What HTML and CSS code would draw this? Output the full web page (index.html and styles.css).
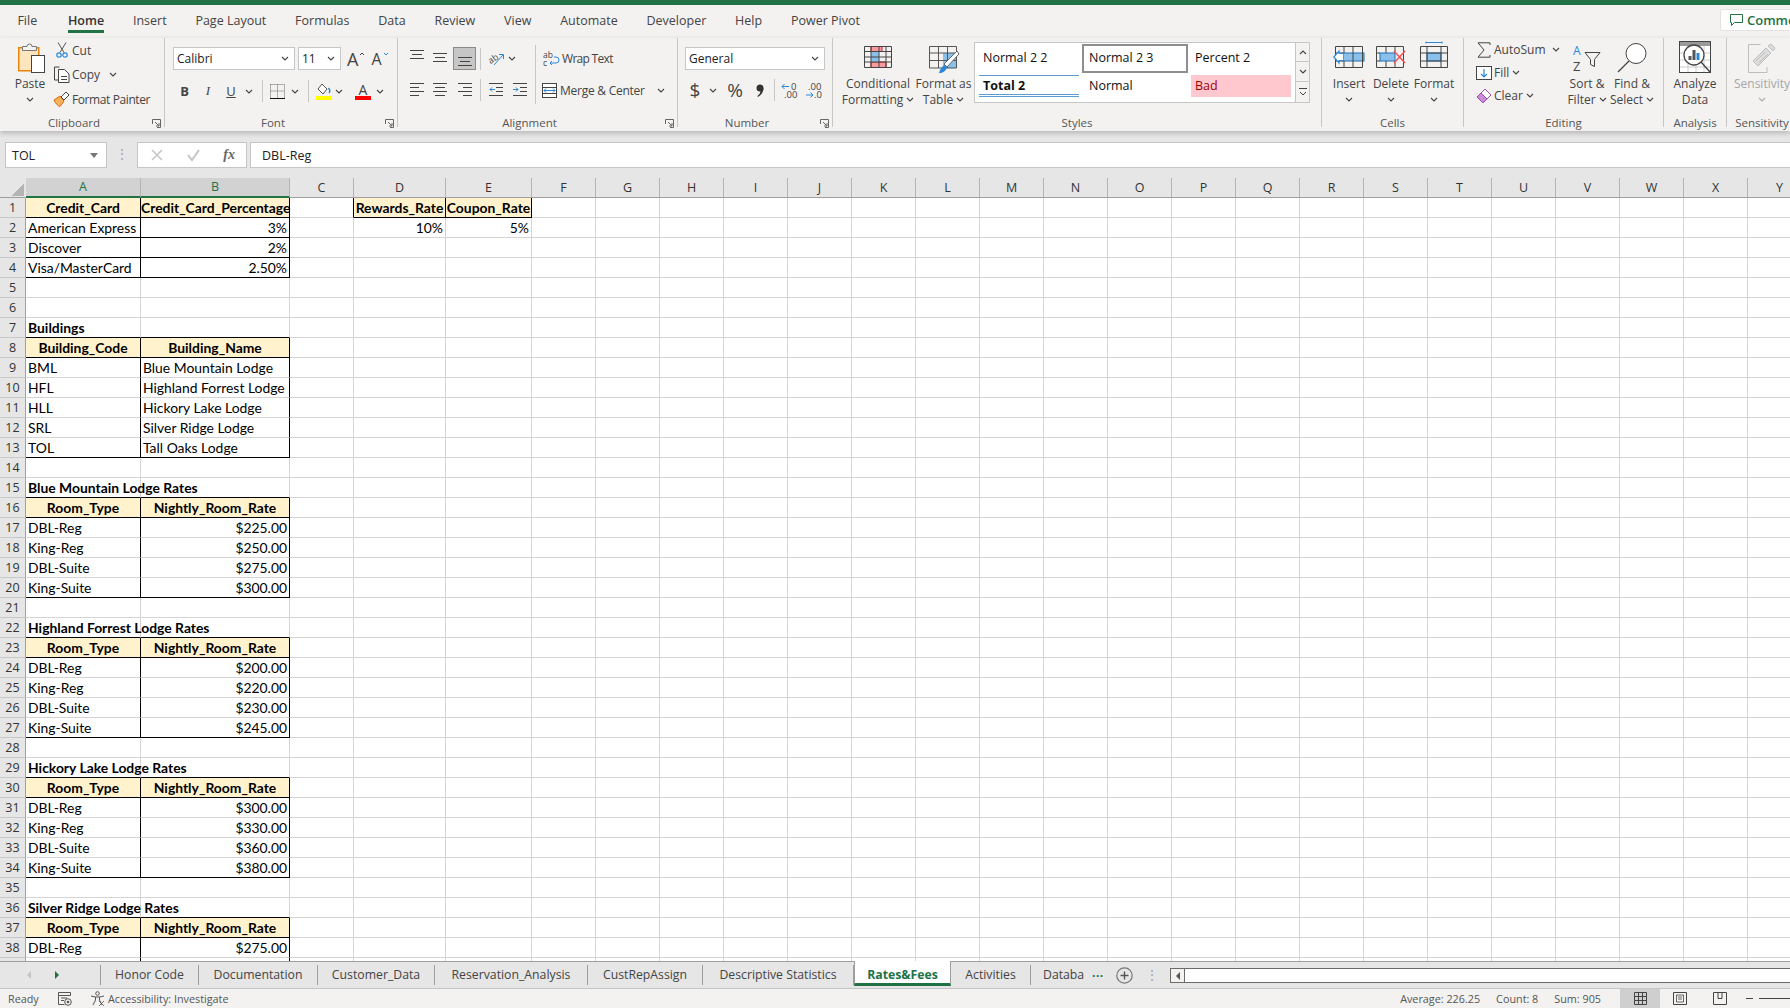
FILE: index.html
```html
<!DOCTYPE html>
<html lang="en">
<head>
    <meta charset="UTF-8">
    <title>Rates&amp;Fees - Excel</title>
    <link rel="stylesheet" href="styles.css">
</head>
<body>
    <!-- shared icon shapes -->
    <svg class="defs" width="0" height="0">
        <symbol id="chev" viewBox="0 0 8 5"><path d="M1 1l3 3 3-3" fill="none" stroke="#444" stroke-width="1.1"/></symbol>
        <symbol id="launch" viewBox="0 0 9 9"><path d="M.5 5V.5H8.5V8.5H5M3 3l4 4M7 4v3H4" fill="none" stroke="#666"/></symbol>
        <symbol id="a-lines" viewBox="0 0 14 10"><path d="M0 .5h14M2 4.5h10M0 8.5h14" stroke="#444" fill="none"/></symbol>
        <symbol id="a-left" viewBox="0 0 14 14"><path d="M0 .5h14M0 4.5h9M0 8.5h14M0 12.5h9" stroke="#444" fill="none"/></symbol>
        <symbol id="a-center" viewBox="0 0 14 14"><path d="M0 .5h14M2 4.5h10M0 8.5h14M2 12.5h10" stroke="#444" fill="none"/></symbol>
        <symbol id="a-right" viewBox="0 0 14 14"><path d="M0 .5h14M5 4.5h9M0 8.5h14M5 12.5h9" stroke="#444" fill="none"/></symbol>
    </svg>

    <div class="titlebar"></div>

    <!-- ribbon tabs -->
    <div class="tabs">
        <div class="tab">File</div>
        <div class="tab active"><span>Home</span></div>
        <div class="tab">Insert</div>
        <div class="tab">Page Layout</div>
        <div class="tab">Formulas</div>
        <div class="tab">Data</div>
        <div class="tab">Review</div>
        <div class="tab">View</div>
        <div class="tab">Automate</div>
        <div class="tab">Developer</div>
        <div class="tab">Help</div>
        <div class="tab">Power Pivot</div>
        <div class="comments">
            <svg width="15" height="14" viewBox="0 0 15 14"><path d="M1.5 1.5h12v8h-8l-3 3v-3h-1z" fill="none" stroke="#217346"/></svg>
            <span>Comments</span>
        </div>
    </div>

    <!-- ribbon -->
    <div class="ribbon">
        <div class="group g-clip">
            <div class="group-body">
                <div class="big paste">
                    <div class="big-icon">
                        <svg width="27" height="30" viewBox="0 0 27 30">
                            <rect x=".75" y="4.75" width="20" height="23" fill="#fde6bd" stroke="#e8830c" stroke-width="1.5"/>
                            <path d="M4.5 7.5v-4H9a2.5 2.5 0 0 1 5 0h4.500v4z" fill="#f3f2f1" stroke="#777"/>
                            <rect x="13.500" y="12.500" width="13" height="17" fill="#fff" stroke="#444"/>
                        </svg>
                    </div>
                    <div class="big-label">Paste</div>
                    <div class="big-label"><svg class="chev"><use href="#chev"/></svg></div>
                </div>
                <div class="small-rows clip-rows">
                    <div class="small-row">
                        <span class="small-icon">
                            <svg width="12" height="16" viewBox="0 0 12 16"><path d="M2 .5l6 10M10 .5L4 10.500" stroke="#555" fill="none"/><circle cx="3" cy="13" r="2.200" fill="none" stroke="#2b88d8" stroke-width="1.200"/><circle cx="9" cy="13" r="2.200" fill="none" stroke="#2b88d8" stroke-width="1.200"/></svg>
                        </span>
                        <span>Cut</span>
                    </div>
                    <div class="small-row">
                        <span class="small-icon">
                            <svg width="16" height="17" viewBox="0 0 16 17"><path d="M5.500 1H.5v13H4" fill="none" stroke="#444"/><path d="M4.500 3.500h6l4.500 4.500v8.500H4.500z" fill="#fff" stroke="#444"/><path d="M7 10.500h6M7 13.500h6" stroke="#444"/></svg>
                        </span>
                        <span>Copy</span>
                        <svg class="chev copy-chev"><use href="#chev"/></svg>
                    </div>
                    <div class="small-row">
                        <span class="small-icon">
                            <svg width="17" height="16" viewBox="0 0 17 16"><path d="M1 9l6-4 4 5-4 5.500C5 15 2 12 1 9z" fill="#f7b25c" stroke="#d8680c"/><path d="M8 6l5-5 3 3-5 5z" fill="#fff" stroke="#444"/></svg>
                        </span>
                        <span class="painter">Format Painter</span>
                    </div>
                </div>
            </div>
            <div class="group-label"><span>Clipboard</span><svg class="launch"><use href="#launch"/></svg></div>
        </div>

        <div class="group g-font">
            <div class="group-body block">
                <div class="font-top">
                    <div class="combo font-name"><span>Calibri</span><svg class="chev"><use href="#chev"/></svg></div>
                    <div class="combo font-size"><span>11</span><svg class="chev"><use href="#chev"/></svg></div>
                    <div class="grow">A<svg width="6" height="4" viewBox="0 0 6 4"><path d="M1 3l2-2 2 2" fill="none" stroke="#444"/></svg></div>
                    <div class="grow shrink">A<svg width="6" height="4" viewBox="0 0 6 4"><path d="M1 1l2 2 2-2" fill="none" stroke="#2b88d8"/></svg></div>
                </div>
                <div class="font-btm">
                    <div class="cell-b">B</div>
                    <div class="cell-i">I</div>
                    <div class="cell-u">U</div>
                    <svg class="chev"><use href="#chev"/></svg>
                    <div class="sep"></div>
                    <svg width="15" height="15" viewBox="0 0 15 15"><path d="M.5 .5h14v13M.5 .5v13M7.500 .5v13M.5 7h14" fill="none" stroke="#666" stroke-dasharray="1 1"/><path d="M0 14.500h15" stroke="#111"/></svg>
                    <svg class="chev"><use href="#chev"/></svg>
                    <div class="sep"></div>
                    <svg width="16" height="17" viewBox="0 0 16 17"><path d="M6 1l5 5-4 5-5-5z" fill="#fff" stroke="#555"/><path d="M12.500 5c1.500 2 1.500 4 .5 5" fill="none" stroke="#2b88d8" stroke-width="1.500"/><rect y="13" width="16" height="4" fill="#ffff00"/></svg>
                    <svg class="chev chev-start"><use href="#chev"/></svg>
                    <div class="color-a">A<i></i></div>
                    <svg class="chev"><use href="#chev"/></svg>
                </div>
            </div>
            <div class="group-label"><span>Font</span><svg class="launch"><use href="#launch"/></svg></div>
        </div>

        <div class="group g-align">
            <div class="group-body block align-body">
                <div class="align-grid">
                    <svg class="al al-top"><use href="#a-lines"/></svg>
                    <svg class="al al-mid"><use href="#a-lines"/></svg>
                    <div class="al-on"><svg class="al al-bot"><use href="#a-lines"/></svg></div>
                    <div class="sep"></div>
                    <svg width="17" height="16" viewBox="0 0 17 16"><text x="0" y="11" font-size="9" fill="#444" font-family="Open Sans" transform="rotate(-35 5 8)">ab</text><path d="M6 14L15 4M11 3.500h4.500V8" fill="none" stroke="#2b88d8"/></svg>
                    <svg class="chev chev-start"><use href="#chev"/></svg>
                    <svg class="al14"><use href="#a-left"/></svg>
                    <svg class="al14"><use href="#a-center"/></svg>
                    <svg class="al14"><use href="#a-right"/></svg>
                    <div class="sep"></div>
                    <svg width="14" height="14" viewBox="0 0 14 14"><path d="M0 .5h14M7 4.500h7M7 8.500h7M0 12.500h14" stroke="#444" fill="none"/><path d="M6 6.500H1M3 4.500l-2 2 2 2" stroke="#2b88d8" fill="none"/></svg>
                    <svg width="14" height="14" viewBox="0 0 14 14"><path d="M0 .5h14M7 4.500h7M7 8.500h7M0 12.500h14" stroke="#444" fill="none"/><path d="M0 6.500h5M3 4.500l2 2-2 2" stroke="#2b88d8" fill="none"/></svg>
                </div>
                <div class="vsep"></div>
                <div class="merge-col">
                    <div class="merge-row">
                        <svg width="17" height="17" viewBox="0 0 17 17"><text x="1" y="8" font-size="8.500" fill="#444" font-family="Open Sans">ab</text><text x="1" y="16" font-size="8.500" fill="#444" font-family="Open Sans">c</text><path d="M12 7h2a2.500 2.500 0 0 1 0 6H8M10 11l-2 2 2 2" fill="none" stroke="#2b88d8"/></svg>
                        <span class="wrap-text">Wrap Text</span>
                    </div>
                    <div class="merge-row">
                        <svg width="15" height="15" viewBox="0 0 15 15"><rect x=".5" y=".5" width="14" height="14" fill="#fff" stroke="#444"/><path d="M.5 4.500h14M.5 10.500h14" stroke="#444"/><path d="M2 7.500h11M4 5.500l-2 2 2 2M11 5.500l2 2-2 2" fill="none" stroke="#2b88d8"/></svg>
                        <span class="merge-text">Merge &amp; Center</span>
                        <svg class="chev merge-chev"><use href="#chev"/></svg>
                    </div>
                </div>
            </div>
            <div class="group-label"><span>Alignment</span><svg class="launch"><use href="#launch"/></svg></div>
        </div>

        <div class="group g-number">
            <div class="group-body block">
                <div class="combo number-format"><span>General</span><svg class="chev"><use href="#chev"/></svg></div>
                <div class="number-btm">
                    <div class="num-sym">$</div>
                    <svg class="chev"><use href="#chev"/></svg>
                    <div class="num-sym">%</div>
                    <svg width="8" height="13" viewBox="0 0 8 13"><circle cx="4" cy="4" r="3.500" fill="#333"/><path d="M7.500 4c0 4-2 7-5.500 9l-.6-1c2-1.500 3-3 3-5z" fill="#333"/></svg>
                    <div class="sep"></div>
                    <svg width="17" height="17" viewBox="0 0 17 17"><text x="10" y="8" font-size="9.500" fill="#444" font-family="Open Sans">0</text><text x="3" y="16" font-size="9.500" fill="#444" font-family="Open Sans">.00</text><path d="M8 4.500H1M3.500 2L1 4.500 3.500 7" fill="none" stroke="#2b88d8"/></svg>
                    <svg width="17" height="17" viewBox="0 0 17 17"><text x="3" y="8" font-size="9.500" fill="#444" font-family="Open Sans">.00</text><text x="9" y="16" font-size="9.500" fill="#444" font-family="Open Sans">.0</text><path d="M1 13h7M5.500 10.500L8 13l-2.500 2.500" fill="none" stroke="#2b88d8"/></svg>
                </div>
            </div>
            <div class="group-label"><span>Number</span><svg class="launch"><use href="#launch"/></svg></div>
        </div>

        <div class="group g-styles">
            <div class="group-body">
                <div class="big cond">
                    <div class="big-icon">
                        <svg width="28" height="22" viewBox="0 0 28 22">
                            <path d="M7 .5h11v5H7zM7 16h15v5.500H7z" fill="#fa9a9f" stroke="#c82127"/>
                            <rect x="7" y="6" width="8" height="10" fill="#8ac0ea"/>
                            <path d="M.5 .5h27v21H.5zM.5 5.500h27M.5 11h27M.5 16h27M7 .5v21M15 .5v21M22 .5v21" fill="none" stroke="#444"/>
                        </svg>
                    </div>
                    <div class="big-label">Conditional</div>
                    <div class="big-label">Formatting <svg class="chev"><use href="#chev"/></svg></div>
                </div>
                <div class="big fmt">
                    <div class="big-icon">
                        <svg width="30" height="28" viewBox="0 0 30 28">
                            <rect x="14" y="7" width="14" height="15" fill="#8ac0ea"/>
                            <path d="M.5 .5h27v21.500H.5zM.5 7h27M.5 14.500h27M9.500 .5v21.500M18.500 .5v21.500" fill="none" stroke="#555"/>
                            <path d="M28 5L15 18l3 3L30 8z" fill="#fff" stroke="#666"/>
                            <path d="M10 27c1-4 3-7 6-8l2 2c-1 4-4 6-8 6z" fill="#2b88d8"/>
                        </svg>
                    </div>
                    <div class="big-label">Format as</div>
                    <div class="big-label">Table <svg class="chev"><use href="#chev"/></svg></div>
                </div>
                <div class="gallery">
                    <div class="style-cell">Normal 2 2</div>
                    <div class="style-cell boxed">Normal 2 3</div>
                    <div class="style-cell">Percent 2</div>
                    <div class="style-cell total">Total 2</div>
                    <div class="style-cell normal">Normal</div>
                    <div class="style-cell bad">Bad</div>
                </div>
                <div class="gallery-scroll">
                    <div><svg width="8" height="5" viewBox="0 0 8 5"><path d="M1 4l3-3 3 3" fill="none" stroke="#444" stroke-width="1.100"/></svg></div>
                    <div><svg class="chev"><use href="#chev"/></svg></div>
                    <div><svg width="8" height="8" viewBox="0 0 8 8"><path d="M0 .5h8M1 4l3 3 3-3" fill="none" stroke="#444"/></svg></div>
                </div>
            </div>
            <div class="group-label"><span>Styles</span></div>
        </div>

        <div class="group g-cells">
            <div class="group-body cells-body">
                <div class="big cell-btn">
                    <div class="big-icon">
                        <svg width="32" height="22" viewBox="0 0 32 22">
                            <rect x="10" y="7" width="21" height="8" fill="#8ac0ea" stroke="#1f6fb8"/>
                            <path d="M2.500 .5h27v21h-27zM2.500 7H10M2.500 15H10M11 .5V7M20 .5v21M11 15v6.500" fill="none" stroke="#444"/>
                            <path d="M10 7.500H6V5L.8 11 6 17v-2.500h4" fill="#fff" stroke="#2b88d8" stroke-width="1.200"/>
                        </svg>
                    </div>
                    <div class="big-label">Insert</div>
                    <div class="big-label"><svg class="chev"><use href="#chev"/></svg></div>
                </div>
                <div class="big cell-btn">
                    <div class="big-icon">
                        <svg width="30" height="22" viewBox="0 0 30 22">
                            <rect x="4" y="7" width="15" height="8" fill="#8ac0ea" stroke="#1f6fb8"/>
                            <path d="M.5 .5h27v21M.5 .5v21h27M.5 7H4M.5 15H4M10 .5V7M19 .5V7M10 15v6.500M19 15v6.500" fill="none" stroke="#444"/>
                            <path d="M18 5l11 12M29 5L18 17" stroke="#f25050" stroke-width="1.400"/>
                        </svg>
                    </div>
                    <div class="big-label">Delete</div>
                    <div class="big-label"><svg class="chev"><use href="#chev"/></svg></div>
                </div>
                <div class="big cell-btn wide">
                    <div class="big-icon">
                        <svg width="28" height="27" viewBox="0 0 28 27">
                            <path d="M6 1.500h16M6 .5v2M22 .5v2" stroke="#2b88d8" fill="none"/>
                            <rect x="7" y="12" width="14" height="8" fill="#8ac0ea" stroke="#1f6fb8"/>
                            <path d="M.5 5.500h27v21H.5zM.5 12h27M.5 20h27M7 5.500v21M21 5.500v21" fill="none" stroke="#444"/>
                        </svg>
                    </div>
                    <div class="big-label">Format</div>
                    <div class="big-label"><svg class="chev"><use href="#chev"/></svg></div>
                </div>
            </div>
            <div class="group-label"><span>Cells</span></div>
        </div>

        <div class="group g-editing">
            <div class="group-body">
                <div class="small-rows edit-rows">
                    <div class="small-row">
                        <span class="small-icon"><svg width="14" height="16" viewBox="0 0 14 16"><path d="M13 3V.8H1l6 7.200-6 7.200h12V13" fill="none" stroke="#444"/></svg></span>
                        <span>AutoSum</span>
                        <svg class="chev auto-chev"><use href="#chev"/></svg>
                    </div>
                    <div class="small-row">
                        <span class="small-icon"><svg width="16" height="14" viewBox="0 0 16 14"><rect x=".5" y=".5" width="15" height="13" fill="#fff" stroke="#444"/><path d="M8 3v8M5 8l3 3 3-3" fill="none" stroke="#2b88d8" stroke-width="1.200"/></svg></span>
                        <span>Fill</span>
                        <svg class="chev tight-chev"><use href="#chev"/></svg>
                    </div>
                    <div class="small-row">
                        <span class="small-icon"><svg width="16" height="16" viewBox="0 0 16 16"><path d="M1 9l8-8 6 6-8 8z" fill="#fff" stroke="#a24ab5"/><path d="M1 9l4-4 6 6-4 4z" fill="#c98dd6" stroke="#a24ab5"/></svg></span>
                        <span>Clear</span>
                        <svg class="chev tight-chev"><use href="#chev"/></svg>
                    </div>
                </div>
                <div class="big sort">
                    <div class="big-icon">
                        <svg width="30" height="28" viewBox="0 0 30 28">
                            <text x="1" y="11" font-size="12" fill="#2b88d8" font-family="Open Sans">A</text>
                            <text x="1" y="27" font-size="13" fill="#444" font-family="Open Sans">Z</text>
                            <path d="M13 8.500h15l-5.500 7v7l-4-2v-5z" fill="none" stroke="#444"/>
                        </svg>
                    </div>
                    <div class="big-label">Sort &amp;</div>
                    <div class="big-label">Filter <svg class="chev"><use href="#chev"/></svg></div>
                </div>
                <div class="big find">
                    <div class="big-icon">
                        <svg width="30" height="30" viewBox="0 0 30 30"><circle cx="19" cy="10.500" r="10" fill="#fff" stroke="#444"/><path d="M12 18L1 29" stroke="#444" stroke-width="1.200"/></svg>
                    </div>
                    <div class="big-label">Find &amp;</div>
                    <div class="big-label">Select <svg class="chev"><use href="#chev"/></svg></div>
                </div>
            </div>
            <div class="group-label"><span>Editing</span></div>
        </div>

        <div class="group g-analysis">
            <div class="group-body">
                <div class="big analyze">
                    <div class="big-icon">
                        <svg width="32" height="32" viewBox="0 0 32 32">
                            <rect x=".5" y=".5" width="31" height="31" fill="#fff" stroke="#444"/>
                            <rect x="1" y="1" width="30" height="4" fill="#999"/>
                            <path d="M1 12h30M1 19h30M1 26h30M9 5v26M17 5v26M25 5v26" stroke="#ccc"/>
                            <circle cx="15" cy="14" r="10" fill="#fff" stroke="#444" stroke-width="1.300"/>
                            <path d="M11 19v-4M15 19V9" stroke="#555" stroke-width="3"/>
                            <path d="M19 19v-7" stroke="#2b88d8" stroke-width="3"/>
                            <path d="M22 21l9 10" stroke="#444" stroke-width="1.400"/>
                        </svg>
                    </div>
                    <div class="big-label">Analyze</div>
                    <div class="big-label">Data</div>
                </div>
            </div>
            <div class="group-label"><span>Analysis</span></div>
        </div>

        <div class="group g-sens">
            <div class="group-body">
                <div class="big sens">
                    <div class="big-icon">
                        <svg width="28" height="30" viewBox="0 0 28 30">
                            <path d="M19 24v5.500H.5V1.500h12" fill="none" stroke="#bdbdbd"/>
                            <path d="M5 18L18 5l5 5-13 13z" fill="#ddd" stroke="#bdbdbd"/>
                            <path d="M20 3l3-2 4 4-2 3z" fill="#ddd" stroke="#bdbdbd"/>
                            <path d="M8 18l9-9M11 20l9-9" stroke="#bdbdbd"/>
                        </svg>
                    </div>
                    <div class="big-label">Sensitivity</div>
                    <div class="big-label"><svg class="chev"><use href="#chev"/></svg></div>
                </div>
            </div>
            <div class="group-label"><span>Sensitivity</span></div>
        </div>
    </div>

    <!-- formula bar -->
    <div class="formula-bar">
        <div class="name-box"><span>TOL</span><i class="drop"></i></div>
        <div class="dots">&#8942;</div>
        <div class="fx-box">
            <svg width="12" height="12" viewBox="0 0 12 12"><path d="M1 1l10 10M11 1L1 11" stroke="#c4c4c4" stroke-width="1.500"/></svg>
            <svg width="13" height="12" viewBox="0 0 13 12"><path d="M1 6l4 5 7-10" fill="none" stroke="#c4c4c4" stroke-width="2"/></svg>
            <span class="fx">fx</span>
        </div>
        <div class="formula-input">DBL-Reg</div>
    </div>

    <!-- sheet -->
    <div class="sheet">
        <table class="grid">
            <colgroup>
                <col class="c-head"><col class="c-a"><col class="c-b"><col class="c-c"><col class="c-d"><col class="c-e">
                <col class="c-n"><col class="c-n"><col class="c-n"><col class="c-n"><col class="c-n"><col class="c-n"><col class="c-n"><col class="c-n"><col class="c-n"><col class="c-n">
                <col class="c-n"><col class="c-n"><col class="c-n"><col class="c-n"><col class="c-n"><col class="c-n"><col class="c-n"><col class="c-n"><col class="c-n"><col class="c-n">
            </colgroup>
            <tr class="cols">
                <th class="corner"></th><th class="sel">A</th><th class="sel">B</th><th>C</th><th>D</th><th>E</th><th>F</th><th>G</th><th>H</th><th>I</th><th>J</th><th>K</th><th>L</th><th>M</th><th>N</th><th>O</th><th>P</th><th>Q</th><th>R</th><th>S</th><th>T</th><th>U</th><th>V</th><th>W</th><th>X</th><th>Y</th>
            </tr>
            <tr><th>1</th><td class="hd kr kb">Credit_Card</td><td class="hd kr kb">Credit_Card_Percentage</td><td class="kr"></td><td class="hd kr kb">Rewards_Rate</td><td class="hd kr kb">Coupon_Rate</td><td class="rest" colspan="20"></td></tr>
            <tr><th>2</th><td class="kr kb">American Express</td><td class="num kr kb">3%</td><td></td><td class="num">10%</td><td class="num">5%</td><td class="rest" colspan="20"></td></tr>
            <tr><th>3</th><td class="kr kb">Discover</td><td class="num kr kb">2%</td><td></td><td></td><td></td><td class="rest" colspan="20"></td></tr>
            <tr><th>4</th><td class="kr kb">Visa/MasterCard</td><td class="num kr kb">2.50%</td><td></td><td></td><td></td><td class="rest" colspan="20"></td></tr>
            <tr><th>5</th><td></td><td></td><td></td><td></td><td></td><td class="rest" colspan="20"></td></tr>
            <tr><th>6</th><td></td><td></td><td></td><td></td><td></td><td class="rest" colspan="20"></td></tr>
            <tr><th>7</th><td class="bold kb">Buildings</td><td class="kb"></td><td></td><td></td><td></td><td class="rest" colspan="20"></td></tr>
            <tr><th>8</th><td class="hd kr kb">Building_Code</td><td class="hd kr kb">Building_Name</td><td></td><td></td><td></td><td class="rest" colspan="20"></td></tr>
            <tr><th>9</th><td class="kr">BML</td><td class="kr">Blue Mountain Lodge</td><td></td><td></td><td></td><td class="rest" colspan="20"></td></tr>
            <tr><th>10</th><td class="kr">HFL</td><td class="kr">Highland Forrest Lodge</td><td></td><td></td><td></td><td class="rest" colspan="20"></td></tr>
            <tr><th>11</th><td class="kr">HLL</td><td class="kr">Hickory Lake Lodge</td><td></td><td></td><td></td><td class="rest" colspan="20"></td></tr>
            <tr><th>12</th><td class="kr">SRL</td><td class="kr">Silver Ridge Lodge</td><td></td><td></td><td></td><td class="rest" colspan="20"></td></tr>
            <tr><th>13</th><td class="kr kb">TOL</td><td class="kr kb">Tall Oaks Lodge</td><td></td><td></td><td></td><td class="rest" colspan="20"></td></tr>
            <tr><th>14</th><td></td><td></td><td></td><td></td><td></td><td class="rest" colspan="20"></td></tr>
            <tr><th>15</th><td class="bold kb">Blue Mountain Lodge Rates</td><td class="kb"></td><td></td><td></td><td></td><td class="rest" colspan="20"></td></tr>
            <tr><th>16</th><td class="hd kr kb">Room_Type</td><td class="hd kr kb">Nightly_Room_Rate</td><td></td><td></td><td></td><td class="rest" colspan="20"></td></tr>
            <tr><th>17</th><td class="kr">DBL-Reg</td><td class="num kr">$225.00</td><td></td><td></td><td></td><td class="rest" colspan="20"></td></tr>
            <tr><th>18</th><td class="kr">King-Reg</td><td class="num kr">$250.00</td><td></td><td></td><td></td><td class="rest" colspan="20"></td></tr>
            <tr><th>19</th><td class="kr">DBL-Suite</td><td class="num kr">$275.00</td><td></td><td></td><td></td><td class="rest" colspan="20"></td></tr>
            <tr><th>20</th><td class="kr kb">King-Suite</td><td class="num kr kb">$300.00</td><td></td><td></td><td></td><td class="rest" colspan="20"></td></tr>
            <tr><th>21</th><td></td><td></td><td></td><td></td><td></td><td class="rest" colspan="20"></td></tr>
            <tr><th>22</th><td class="bold kb">Highland Forrest Lodge Rates</td><td class="kb"></td><td></td><td></td><td></td><td class="rest" colspan="20"></td></tr>
            <tr><th>23</th><td class="hd kr kb">Room_Type</td><td class="hd kr kb">Nightly_Room_Rate</td><td></td><td></td><td></td><td class="rest" colspan="20"></td></tr>
            <tr><th>24</th><td class="kr">DBL-Reg</td><td class="num kr">$200.00</td><td></td><td></td><td></td><td class="rest" colspan="20"></td></tr>
            <tr><th>25</th><td class="kr">King-Reg</td><td class="num kr">$220.00</td><td></td><td></td><td></td><td class="rest" colspan="20"></td></tr>
            <tr><th>26</th><td class="kr">DBL-Suite</td><td class="num kr">$230.00</td><td></td><td></td><td></td><td class="rest" colspan="20"></td></tr>
            <tr><th>27</th><td class="kr kb">King-Suite</td><td class="num kr kb">$245.00</td><td></td><td></td><td></td><td class="rest" colspan="20"></td></tr>
            <tr><th>28</th><td></td><td></td><td></td><td></td><td></td><td class="rest" colspan="20"></td></tr>
            <tr><th>29</th><td class="bold kb">Hickory Lake Lodge Rates</td><td class="kb"></td><td></td><td></td><td></td><td class="rest" colspan="20"></td></tr>
            <tr><th>30</th><td class="hd kr kb">Room_Type</td><td class="hd kr kb">Nightly_Room_Rate</td><td></td><td></td><td></td><td class="rest" colspan="20"></td></tr>
            <tr><th>31</th><td class="kr">DBL-Reg</td><td class="num kr">$300.00</td><td></td><td></td><td></td><td class="rest" colspan="20"></td></tr>
            <tr><th>32</th><td class="kr">King-Reg</td><td class="num kr">$330.00</td><td></td><td></td><td></td><td class="rest" colspan="20"></td></tr>
            <tr><th>33</th><td class="kr">DBL-Suite</td><td class="num kr">$360.00</td><td></td><td></td><td></td><td class="rest" colspan="20"></td></tr>
            <tr><th>34</th><td class="kr kb">King-Suite</td><td class="num kr kb">$380.00</td><td></td><td></td><td></td><td class="rest" colspan="20"></td></tr>
            <tr><th>35</th><td></td><td></td><td></td><td></td><td></td><td class="rest" colspan="20"></td></tr>
            <tr><th>36</th><td class="bold kb">Silver Ridge Lodge Rates</td><td class="kb"></td><td></td><td></td><td></td><td class="rest" colspan="20"></td></tr>
            <tr><th>37</th><td class="hd kr kb">Room_Type</td><td class="hd kr kb">Nightly_Room_Rate</td><td></td><td></td><td></td><td class="rest" colspan="20"></td></tr>
            <tr><th>38</th><td class="kr">DBL-Reg</td><td class="num kr">$275.00</td><td></td><td></td><td></td><td class="rest" colspan="20"></td></tr>
            <tr><th></th><td class="kr"></td><td class="kr"></td><td></td><td></td><td></td><td class="rest" colspan="20"></td></tr>
        </table>
    </div>

    <!-- sheet tabs -->
    <div class="sheet-tabs">
        <div class="tab-nav">
            <i class="nav-left"></i>
            <i class="nav-right"></i>
        </div>
        <div class="sheet-tab st-honor">Honor Code</div>
        <div class="sheet-tab st-doc">Documentation</div>
        <div class="sheet-tab st-cust">Customer_Data</div>
        <div class="sheet-tab st-res">Reservation_Analysis</div>
        <div class="sheet-tab st-rep">CustRepAssign</div>
        <div class="sheet-tab st-desc">Descriptive Statistics</div>
        <div class="sheet-tab current">Rates&amp;Fees</div>
        <div class="sheet-tab st-act">Activities</div>
        <div class="sheet-tab cut">Databa</div>
        <div class="more">...</div>
        <svg class="add" width="17" height="17" viewBox="0 0 17 17"><circle cx="8.500" cy="8.500" r="7.700" fill="none" stroke="#777" stroke-width="1.200"/><path d="M8.500 4.500v8M4.500 8.500h8" stroke="#555" stroke-width="1.400"/></svg>
        <div class="dots tab-dots">&#8942;</div>
        <div class="hscroll"><div class="hscroll-btn"><i></i></div></div>
    </div>

    <!-- status bar -->
    <div class="status">
        <span class="ready">Ready</span>
        <svg class="macro" width="14" height="14" viewBox="0 0 14 14"><path d="M.5 .5h12v3H.5zM.5 3.500v9h6M3 6h6M3 8.500h3" fill="none" stroke="#555"/><circle cx="10" cy="10" r="3.300" fill="none" stroke="#555"/><circle cx="10" cy="10" r="1.300" fill="#555"/></svg>
        <svg class="access" width="15" height="15" viewBox="0 0 15 15"><circle cx="7.500" cy="2.500" r="1.800" fill="none" stroke="#555"/><path d="M1 5l4.500 1v3L3 14M14 5L9.500 6v3l2.500 5M5.500 6h4" fill="none" stroke="#555"/><path d="M9 10l5 5M14 10l-5 5" stroke="#555" stroke-width=".8"/></svg>
        <span>Accessibility: Investigate</span>
        <div class="stats">
            <span>Average: 226.25</span>
            <span>Count: 8</span>
            <span>Sum: 905</span>
        </div>
        <div class="view on"><svg width="13" height="13" viewBox="0 0 13 13"><path d="M.5 .5h12v12H.5zM.5 4.500h12M.5 8.500h12M4.500 .5v12M8.500 .5v12" fill="none" stroke="#444"/></svg></div>
        <div class="view"><svg width="14" height="13" viewBox="0 0 14 13"><path d="M.5 .5h13v12H.5z" fill="none" stroke="#444"/><path d="M3.500 3h7v7h-7zM5 5h4M5 7h4" fill="none" stroke="#444" stroke-width=".8"/></svg></div>
        <div class="view"><svg width="14" height="13" viewBox="0 0 14 13"><path d="M.5 .5h13v12H.5zM5 .5v6h4v-6" fill="none" stroke="#444"/></svg></div>
        <div class="zoom-bar"><i class="minus"></i><i class="slider"></i></div>
    </div>
</body>
</html>
```

FILE: styles.css
```css
* {
    box-sizing: border-box;
    margin: 0;
    padding: 0;
}

body {
    width: 1790px;
    height: 1008px;
    overflow: hidden;
    background-color: #f3f2f1;
    font-family: "Open Sans", sans-serif;
    font-size: 12px;
    color: #444;
}

.defs {
    position: absolute;
}

svg {
    display: block;
    flex: none;
    overflow: visible;
}

.titlebar {
    height: 5px;
    background-color: #217346;
}

/* ribbon tabs */
.tabs {
    display: flex;
    height: 33px;
    padding-left: 3px;
}

.tab {
    padding: 0 14.400px;
    line-height: 31px;
    font-size: 12.500px;
    white-space: nowrap;
}

.tab.active {
    margin-left: 2px;
    font-weight: 600;
    color: #333;
}

.tab.active span {
    display: block;
    height: 28px;
    border-bottom: 3px solid #217346;
}

.comments {
    display: flex;
    align-items: center;
    gap: 3px;
    flex: none;
    width: 110px;
    height: 22px;
    margin: 4px -40px 0 auto;
    padding-left: 8px;
    background-color: #fff;
    border: 1px solid #e4e2e0;
    border-radius: 2px;
    color: #217346;
    font-size: 13px;
    font-weight: 600;
}

/* ribbon */
.ribbon {
    position: relative;
    z-index: 1;
    display: flex;
    height: 93px;
    box-shadow: 0 2px 5px rgba(0,0,0,0.22);
    background-color: #f3f2f1;
}

.group {
    flex: none;
    height: 89px;
    border-right: 1px solid #c8c6c4;
    white-space: nowrap;
}

.g-clip { width: 165px; }
.g-font { width: 233px; }
.g-align { width: 280px; }
.g-number { width: 155px; }
.g-styles { width: 489px; }
.g-cells { width: 142px; }
.g-editing { width: 200px; }
.g-analysis { width: 63px; }
.g-sens { width: 70px; border-right: none; }

.group-body {
    display: flex;
    height: 77px;
}

.group-body.block {
    display: block;
    padding: 9px 0 0 8px;
}

.group-label {
    display: flex;
    align-items: center;
    height: 14px;
    font-size: 11.500px;
    color: #555;
}

.group-label span {
    flex: 1;
    text-align: center;
}

.launch {
    width: 9px;
    height: 9px;
    margin: 3px 3px 0 4px;
}

.chev {
    width: 8px;
    height: 5px;
}

/* big ribbon buttons: icon on top, two lines of label */
.big {
    display: flex;
    flex: none;
    flex-direction: column;
    align-items: center;
    padding-top: 3px;
}

.big-icon {
    display: flex;
    align-items: flex-start;
    justify-content: center;
    height: 34.500px;
}

.big-label {
    display: flex;
    align-items: center;
    justify-content: center;
    gap: 3px;
    height: 16px;
}

.paste { width: 30px; margin-left: 15px; }
.paste .big-icon { margin-left: 2px; padding-top: 2px; }
.cond .big-icon,
.fmt .big-icon,
.cell-btn .big-icon { padding-top: 5px; }
.cell-btn.wide .big-icon { padding-top: 0; }
.sort .big-icon { padding-top: 3px; }
.find .big-icon,
.sens .big-icon { padding-top: 2px; }

.small-rows {
    display: flex;
    flex-direction: column;
}

.small-row {
    display: flex;
    align-items: center;
    height: 24.500px;
}

.small-icon {
    display: flex;
    justify-content: center;
    width: 17px;
    margin-right: 2px;
}

.clip-rows { margin-left: 8px; }
.copy-chev { margin-left: 9px; }
.painter { letter-spacing: -0.4px; }

/* font group */
.font-top {
    display: flex;
    align-items: center;
    height: 23px;
}

.combo {
    display: flex;
    align-items: center;
    justify-content: space-between;
    height: 23px;
    padding: 0 5px 0 3px;
    background-color: #fff;
    border: 1px solid #c6c6c6;
    color: #222;
    font-size: 12px;
}

.font-name { width: 122px; }
.font-size { width: 43px; margin-left: 3px; }
.number-format { width: 140px; }

.grow {
    display: flex;
    align-items: flex-start;
    margin-left: 6px;
    font-size: 18px;
    line-height: 22px;
    color: #444;
}

.grow svg {
    margin: 4px 0 0 1px;
}

.shrink {
    margin-left: 6px;
    font-size: 16px;
}

.font-btm {
    display: grid;
    grid-template-columns: 23px 24px 22px 14px 12px 18px 18px 8px 23px 16px 24px 10px;
    align-items: center;
    justify-items: center;
    height: 22px;
    margin-top: 10px;
}

.cell-b { font-weight: 700; font-size: 13px; }
.cell-i { font-style: italic; font-size: 13px; font-family: "Liberation Serif", serif; }
.cell-u { text-decoration: underline; font-size: 13px; }
.chev-start { justify-self: start; }

.sep {
    width: 1px;
    height: 22px;
    background-color: #c8c6c4;
}

.color-a {
    width: 16px;
    font-size: 14px;
    line-height: 13px;
    text-align: center;
}

.color-a i {
    display: block;
    height: 4px;
    background-color: #f00;
}

/* alignment group */
.align-body.block {
    display: flex;
    padding-left: 8px;
}

.align-grid {
    display: grid;
    grid-template-columns: 21px 26px 23px 8px 24px 24px;
    grid-template-rows: 23px 22px;
    row-gap: 9px;
    align-items: center;
    justify-items: center;
}

.al {
    width: 14px;
    height: 10px;
}

.al-top { margin-top: -8px; }
.al-mid { margin-top: -2px; }
.al-bot { margin-top: 6px; }

.al14 {
    width: 14px;
    height: 14px;
}

.al-on {
    display: flex;
    align-items: center;
    justify-content: center;
    width: 23px;
    height: 23px;
    background-color: #c6c6c6;
    border: 1px solid #8a8a8a;
}

.vsep {
    width: 1px;
    height: 59px;
    margin: -2px 6px 0 3px;
    background-color: #c8c6c4;
}

.merge-col {
    display: grid;
    grid-template-rows: 23px 22px;
    row-gap: 9px;
}

.merge-row {
    display: flex;
    align-items: center;
    gap: 3px;
}

.wrap-text { letter-spacing: -0.7px; }
.merge-text { letter-spacing: -0.25px; }
.merge-chev { margin-left: 9px; }

/* number group */
.g-number .group-body.block {
    padding-left: 7px;
}

.number-btm {
    display: grid;
    grid-template-columns: 20px 16px 28px 22px 6px 25px 22px;
    align-items: center;
    justify-items: center;
    height: 22px;
    margin-top: 9px;
}

.num-sym {
    font-size: 19px;
    line-height: 22px;
}

/* styles group */
.cond { width: 70px; margin-left: 10px; }
.fmt { width: 61px; }

.gallery {
    display: grid;
    grid-template-columns: 100px 112px 100px;
    grid-template-rows: 32px 22px;
    align-content: start;
    flex: none;
    width: 322px;
    height: 61px;
    margin-top: 4px;
    padding: 0 0 0 4px;
    background-color: #fff;
    border: 1px solid #c6c6c6;
    color: #111;
    font-size: 12.500px;
}

.style-cell {
    display: flex;
    align-items: center;
    height: 29px;
    padding-left: 4px;
}

.style-cell.boxed {
    height: 29px;
    margin: 1px 3px 0;
    padding: 0 0 2px 5px;
    border: 2px solid #8e8e8e;
}

.style-cell.total {
    height: 22px;
    border-top: 1px solid #5b9bd5;
    border-bottom: 3px double #5b9bd5;
    font-weight: 700;
}

.style-cell.normal {
    height: 22px;
    padding: 0 0 2px 10px;
}

.style-cell.bad {
    height: 22px;
    padding-bottom: 2px;
    background-color: #ffc7ce;
    color: #9c0006;
}

.gallery-scroll {
    display: flex;
    flex-direction: column;
    margin-top: 4px;
}

.gallery-scroll div {
    display: flex;
    align-items: center;
    justify-content: center;
    width: 14px;
    height: 20px;
    border: 1px solid #c6c6c6;
    border-left: none;
}

.gallery-scroll div:nth-child(2) {
    height: 20px;
    border-top: none;
}

.gallery-scroll div:last-child {
    height: 21px;
    border-top: none;
}

/* cells group */
.cells-body { padding-left: 6px; }
.cell-btn { width: 42px; }
.cell-btn.wide { width: 44px; }

/* editing group */
.edit-rows { width: 87px; margin-left: 11px; }
.edit-rows .small-row { height: 23px; }
.auto-chev { margin-left: 6px; }
.tight-chev { margin-left: 3px; }
.sort { width: 50px; }
.find { width: 40px; }

/* analysis, sensitivity */
.analyze { width: 62px; }
.sens { width: 70px; color: #a6a6a6; }
.sens .chev { opacity: 0.4; }

/* formula bar */
.formula-bar {
    display: flex;
    height: 47px;
    padding: 11px 0 0 5px;
    background-color: #e6e6e6;
}

.name-box,
.fx-box,
.formula-input {
    display: flex;
    align-items: center;
    height: 26px;
    background-color: #fff;
    border: 1px solid #c6c6c6;
}

.name-box {
    justify-content: space-between;
    width: 102px;
    padding: 0 8px 0 6px;
    color: #222;
    font-size: 12.500px;
}

.drop {
    width: 0;
    height: 0;
    border-left: 4px solid transparent;
    border-right: 4px solid transparent;
    border-top: 5px solid #777;
}

.dots {
    width: 30px;
    line-height: 24px;
    font-size: 14px;
    color: #a8a8a8;
    text-align: center;
}

.fx-box {
    justify-content: space-between;
    width: 110px;
    padding: 0 11px 0 13px;
}

.fx {
    font-family: "Liberation Serif", serif;
    font-style: italic;
    font-weight: 700;
    font-size: 14px;
    color: #666;
}

.formula-input {
    flex: 1;
    margin-left: 3px;
    padding-left: 11px;
    border-right: none;
    color: #222;
    font-size: 12.500px;
}

/* sheet */
.sheet {
    height: 783px;
    overflow: hidden;
    background-color: #fff;
}

.grid {
    table-layout: fixed;
    width: 1812px;
    border-collapse: separate;
    border-spacing: 0;
    font-family: Lato, sans-serif;
    font-size: 13.900px;
    color: #000;
}

.c-head { width: 26px; }
.c-a { width: 115px; }
.c-b { width: 149px; }
.c-c { width: 64px; }
.c-d { width: 92px; }
.c-e { width: 86px; }
.c-n { width: 64px; }

.grid tr {
    height: 20px;
}

.grid td {
    padding: 1px 2px 0;
    height: 20px;
    line-height: 18px;
    vertical-align: top;
    border-right: 1px solid #d4d4d4;
    border-bottom: 1px solid #d4d4d4;
    white-space: nowrap;
    overflow: visible;
}

.grid th {
    height: 20px;
    padding-top: 1px;
    background-color: #e6e6e6;
    border-right: 1px solid #a0a0a0;
    border-bottom: 1px solid #c8c8c8;
    font-family: "Open Sans", sans-serif;
    font-weight: 400;
    font-size: 12.500px;
    color: #333;
    line-height: 18px;
}

.grid .cols th {
    padding-top: 0;
    border-right-color: #b4b4b4;
    border-bottom-color: #9e9e9e;
}

.grid .cols th.sel {
    background-color: #d2d2d2;
    border-bottom: 2px solid #217346;
    color: #217346;
}

.grid .cols th.corner {
    background: linear-gradient(135deg, transparent 50%, #b4b4b4 50%) 12px 4px / 12px 14px no-repeat #e6e6e6;
    border-right-color: #e6e6e6;
}

.grid td.kr { border-right-color: #000; }
.grid td.kb { border-bottom-color: #000; }

.grid td.hd {
    background-color: #fff2cc;
    font-weight: 700;
    text-align: center;
    padding: 1px 0 0;
}

.grid td.num { text-align: right; }
.grid td.bold { font-weight: 700; }

.grid td.rest {
    padding: 0;
    border-right: none;
    background: repeating-linear-gradient(to right, transparent 0 63px, #d4d4d4 63px 64px);
}

/* sheet tabs */
.sheet-tabs {
    display: flex;
    align-items: stretch;
    height: 28px;
    background-color: #e6e6e6;
    border-top: 1px solid #9e9e9e;
    border-bottom: 1px solid #c4c4c4;
    white-space: nowrap;
}

.tab-nav {
    display: flex;
    align-items: center;
    gap: 24px;
    width: 101px;
    padding-left: 27px;
    border-right: 1px solid #9e9e9e;
    margin: 3px 0;
}

.nav-left,
.nav-right {
    width: 0;
    height: 0;
    border-top: 4px solid transparent;
    border-bottom: 4px solid transparent;
}

.nav-left { border-right: 4px solid #c4c4c4; }
.nav-right { border-left: 4px solid #217346; }

.sheet-tab {
    flex: none;
    margin: 3px 0;
    line-height: 20px;
    font-size: 12.250px;
    text-align: center;
    border-right: 1px solid #9e9e9e;
    color: #444;
}

.st-honor { width: 98px; }
.st-doc { width: 119px; }
.st-cust { width: 117px; }
.st-res { width: 153px; }
.st-rep { width: 115px; }
.st-desc { width: 151px; }
.st-act { width: 80px; }

.sheet-tab.current {
    width: 97px;
    height: 25px;
    margin: -1px 0 0 0;
    padding-top: 4px;
    background-color: #fff;
    border-left: 1px solid #9e9e9e;
    border-right: 1px solid #9e9e9e;
    border-bottom: 3px solid #217346;
    color: #217346;
    font-weight: 700;
}

.sheet-tab.cut {
    width: 52px;
    padding-left: 12px;
    border-right: none;
    text-align: left;
}

.more {
    width: 33px;
    padding-left: 9px;
    color: #217346;
    font-weight: 700;
    letter-spacing: 0.5px;
    line-height: 22px;
}

.add {
    align-self: center;
}

.tab-dots {
    flex: none;
    width: 37px;
    line-height: 26px;
}

.hscroll {
    flex: 1;
    height: 15px;
    margin-top: 6px;
    background-color: #fff;
    border-top: 1px solid #6b6b6b;
    border-bottom: 1px solid #6b6b6b;
}

.hscroll-btn {
    display: flex;
    align-items: center;
    justify-content: center;
    width: 15px;
    height: 13px;
    background-color: #f3f2f1;
    border-left: 1px solid #6b6b6b;
    border-right: 1px solid #6b6b6b;
}

.hscroll-btn i {
    width: 0;
    height: 0;
    border-top: 4px solid transparent;
    border-bottom: 4px solid transparent;
    border-right: 4px solid #555;
}

/* status bar */
.status {
    display: flex;
    align-items: center;
    height: 19px;
    padding-left: 8px;
    font-size: 10.800px;
    color: #555;
    white-space: nowrap;
}

.ready { width: 50px; }
.macro { margin-right: 18px; }
.access { margin-right: 3px; }

.stats {
    display: flex;
    gap: 16px;
    margin: 0 19px 0 auto;
}

.view {
    display: flex;
    align-items: center;
    justify-content: center;
    width: 40px;
    height: 19px;
}

.view.on {
    background-color: #cfcfcf;
}

.zoom-bar {
    display: flex;
    align-items: center;
    width: 50px;
    padding-left: 6px;
}

.minus {
    width: 7px;
    height: 1px;
    background-color: #444;
}

.slider {
    flex: 1;
    height: 1px;
    margin-left: 6px;
    background-color: #444;
}
```
